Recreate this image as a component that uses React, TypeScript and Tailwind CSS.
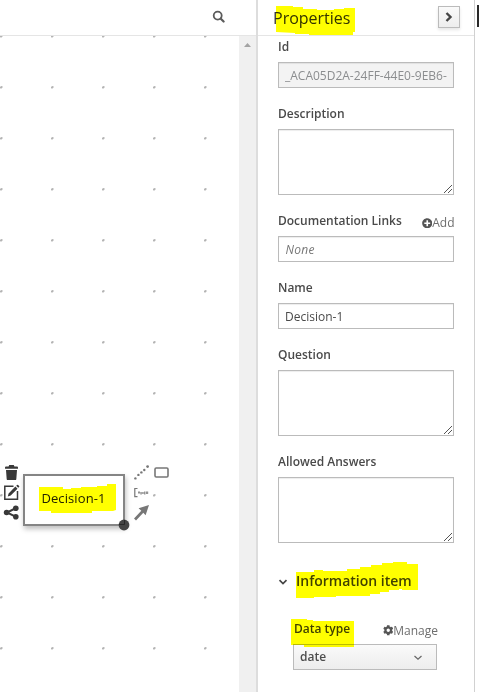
import type { ReactNode } from "react";
import { FaCog, FaPlusCircle } from "react-icons/fa";

const columns = [1, 52, 103, 154, 205];
const rows = [36, 87, 138, 189, 240, 291, 342, 393, 444, 495, 546, 597, 648];

function Marker({ className, width, height, points }: { className: string; width: number; height: number; points: string }) {
  return (
    <svg className={`absolute mix-blend-multiply pointer-events-none max-w-none ${className}`} width={width} height={height}>
      <polygon points={points} fill="#ff0" />
    </svg>
  );
}

function Field({ label, action, children }: { label: string; action?: ReactNode; children: ReactNode }) {
  return (
    <div className="mb-4">
      <div className="mb-[6px] flex h-[18px] items-center justify-between">
        <label className="text-[12px] font-semibold leading-[18px] text-[#4a4a4a]">{label}</label>
        {action}
      </div>
      {children}
    </div>
  );
}

function TextBox({ children, className = "" }: { children: ReactNode; className?: string }) {
  return (
    <div className={`flex h-[26px] items-center overflow-hidden whitespace-nowrap border border-[#bbb] px-1.5 pt-[2px] text-[12px] shadow-[inset_0_1px_1px_rgba(3,3,3,0.075)] ${className}`}>
      {children}
    </div>
  );
}

function TextArea() {
  return (
    <div className="flex h-[66px] items-end justify-end border border-[#bbb] p-px shadow-[inset_0_1px_1px_rgba(3,3,3,0.075)]">
      <svg width="8" height="8" stroke="#555" strokeWidth="1">
        <path d="M0 8 8 0M4 8l4-4" />
      </svg>
    </div>
  );
}

function Canvas() {
  return (
    <div className="relative w-[239px] overflow-hidden">
      <svg className="absolute left-0 top-0" width="239" height="656">
        {rows.map((y) =>
          columns.map((x) => (
            <g key={`${x}-${y}`}>
              <rect x={x - 1} y={y - 37} width="3" height="2" fill="#dedede" />
              <rect x={x} y={y - 37} width="1" height="1" fill="#bbb" />
              <rect x={x - 1} y={y - 36} width="2" height="1" fill="#b4b4b4" />
              <rect x={x - 1} y={y - 35} width="2" height="1" fill="#e0e0e0" />
            </g>
          )),
        )}
      </svg>

      <div className="absolute left-[23px] top-[438px] flex h-[52px] w-[102px] items-center justify-center border-2 border-[#858585] bg-white text-[13px] text-[#222] shadow-[1px_3px_5px_rgba(0,0,0,0.25)]">
        <span className="relative -left-[0.5px] -top-[1px] tracking-[0.1px]">Decision-1</span>
        <Marker className="left-[14px] top-[8px]" width={78} height={30} points="0,3 24,3 24,5 32,5 32,4 42,4 42,3 58,3 58,2 68,2 68,0 77,0 77,26 74,27 53,27 53,29 12,29 12,27 0,27" />
      </div>
      <svg className="absolute left-[117px] top-[482px]" width="14" height="14">
        <circle cx="7" cy="7" r="5.4" fill="#454545" />
        <path d="M2 6.5h5.5V2" fill="none" stroke="#292929" />
      </svg>

      <svg className="absolute left-[3px] top-[428px]" width="18" height="58" fill="#393939">
        <path d="M2 3.4Q2 2.5 3 2.5h2.6L6.2 1h4.6l.6 1.5H14q1 0 1 .9v1.4H2zM3 6h11l-.7 9.2q-.1.9-1 .9H4.7q-.9 0-1-.9z" />
        <path d="M10.5 22.3H1.8v12.9h12.7V27" fill="none" stroke="#393939" strokeWidth="1.5" />
        <path d="m4.8 32.5.8-3 6.8-6.9 2.1 2.1-6.8 6.9zM13.2 21.8l.9-.9q.5-.5 1 0l1 1q.5.5 0 1l-.9.9z" />
        <path d="M13 44 4 48.5l9 4.3" fill="none" stroke="#393939" strokeWidth="2" />
        <circle cx="12.8" cy="44.2" r="2.8" />
        <circle cx="3.6" cy="48.5" r="2.8" />
        <circle cx="12.8" cy="52.8" r="2.8" />
      </svg>

      <svg className="absolute left-[133px] top-[426px]" width="40" height="62" fill="#777">
        <circle cx="2.4" cy="16.4" r="1.2" />
        <circle cx="5.4" cy="12.9" r="1.2" />
        <circle cx="8.4" cy="10.4" r="1.2" />
        <circle cx="11.3" cy="8" r="1.2" />
        <circle cx="14.6" cy="4.6" r="1.4" />
        <rect x="22" y="6" width="13" height="9" rx="1.2" fill="none" stroke="#777" strokeWidth="1.6" />
        <path d="M4.5 26.5H1.8v8.2h2.7" fill="none" stroke="#777" strokeWidth="1.2" />
        <path d="M5 29.5h2v2H5zM7.3 30h1.5v2.5H7.3zM9.2 30h1.5v2H9.2zM11 29.5h1.5v3H11zM13 29.5h2.2v2.5H13z" fill="#929292" />
        <path d="m1 56.4 7.3-7.6L5.6 46.2 16 43l-3.4 10.2-2.3-2.4L3 58.4z" />
      </svg>
    </div>
  );
}

export default function App() {
  return (
    <div className="flex h-[692px] w-[479px] overflow-hidden bg-white font-['Open_Sans','Noto_Sans',sans-serif] text-[#414141]">
      <main className="flex w-64 shrink-0 flex-col">
        <header className="flex h-9 items-center justify-end border-b border-[#e5e5e5] pr-[31px]">
          <svg className="relative -top-[1px]" width="13" height="13" fill="none" stroke="#5b5b5b">
            <circle cx="5.7" cy="5.6" r="4" strokeWidth="1.8" />
            <path d="m8.8 8.7 2.8 2.8" strokeWidth="2.2" strokeLinecap="round" />
          </svg>
        </header>
        <div className="flex flex-1">
          <Canvas />
          <div className="flex w-[17px] justify-center bg-[#f0f0f0] pt-[7px]">
            <svg width="7" height="4" fill="#a3a3a3"><path d="M0 4 3.5 0 7 4z" /></svg>
          </div>
        </div>
      </main>

      <aside className="flex w-[219px] shrink-0 flex-col border-l-2 border-r border-l-[#ddd] border-r-[#d1d1d1]">
        <header className="flex h-9 shrink-0 items-center justify-between border-b border-[#e5e5e5] pl-[15px] pr-[14px]">
          <h1 className="relative text-[16px] leading-[22px] text-[#333]">
            Properties
            <Marker className="left-[3px] -top-[1px]" width={80} height={30} points="0,0 17,0 17,1 27,1 27,3 41,3 41,4 58,4 58,3 68,3 68,2 79,2 79,26 77,26 77,29 33,29 33,28 19,28 19,27 0,26" />
          </h1>
          <button className="mt-[-2px] flex h-[22px] w-[22px] items-center justify-center border border-[#bbb] bg-gradient-to-b from-[#fafafa] to-[#ededed] shadow-[0_2px_3px_rgba(3,3,3,0.1)]">
            <svg width="8" height="10" fill="none" stroke="#454545" strokeWidth="2.4"><path d="m1.5 1 4 4-4 4" /></svg>
          </button>
        </header>

        <div className="pl-5 pr-5 pt-[2px]">
          <Field label="Id"><TextBox className="bg-[#f3f3f3] text-[#8b8d8f]">_ACA05D2A-24FF-44E0-9EB6-</TextBox></Field>
          <div className="h-px" />
          <Field label="Description"><TextArea /></Field>
          <div className="h-px" />
          <Field
            label="Documentation Links"
            action={<span className="relative left-[0.5px] top-[2px] flex items-center text-[12px] text-[#6e6e6e]"><FaPlusCircle size={10.5} className="text-[#555]" />Add</span>}
          >
            <TextBox className="italic text-[#777]"><span className="ml-[0.5px] tracking-[0.3px]">None</span></TextBox>
          </Field>
          <div className="h-px" />
          <Field label="Name"><TextBox className="text-[#4a4a4a]">Decision-1</TextBox></Field>
          <div className="h-px" />
          <Field label="Question"><TextArea /></Field>
          <div className="h-px" />
          <Field label="Allowed Answers"><TextArea /></Field>

          <section className="pt-3">
            <div className="flex h-5 items-center">
              <svg className="relative top-px" width="10" height="8" fill="none" stroke="#444" strokeWidth="1.7"><path d="m1.5 2.2 3.5 3.4 3.5-3.4" /></svg>
              <h2 className="relative ml-2 whitespace-nowrap text-[14px] font-semibold leading-5">
                Information item
                <Marker className="left-0 -top-[9px]" width={123} height={38} points="0,10 18,10 18,8 27,8 27,9 51,9 51,7 64,7 64,5 75,5 75,3 86,3 86,1 97,1 97,0 111,0 111,2 122,2 122,28 106,28 106,27 103,27 103,28 93,28 93,30 84,30 84,32 74,32 74,34 40,34 40,35 18,35 18,36 0,36" />
              </h2>
            </div>
            <div className="ml-[15px] mt-7 w-[145px]">
              <div className="mb-[6px] flex h-[19px] items-center justify-between">
                <label className="relative ml-[1px] text-[12px] font-semibold leading-[18px]">
                  Data type
                  <Marker className="-left-[3px] -top-[1px]" width={64} height={29} points="0,0 16,0 16,1 22,1 22,2 63,2 63,28 13,28 13,26 0,26" />
                </label>
                <span className="relative top-[2px] flex items-center text-[12px] text-[#6e6e6e]"><FaCog size={10.5} className="text-[#555]" />Manage</span>
              </div>
              <button className="flex h-[26px] w-36 items-center justify-between border border-[#bbb] bg-gradient-to-b from-[#fafafa] to-[#ededed] pl-1.5 pr-[14px] text-[12px] font-semibold text-[#4d4d4d]">
                <span>date</span>
                <svg className="relative top-px" width="8" height="6" fill="none" stroke="#666" strokeWidth="1.2"><path d="m.5 1 3.5 3.3L7.5 1" /></svg>
              </button>
            </div>
          </section>
        </div>
      </aside>
      <div className="ml-[2px] mt-[5px] h-[22px] w-[2px] bg-[#292929]" />
    </div>
  );
}
